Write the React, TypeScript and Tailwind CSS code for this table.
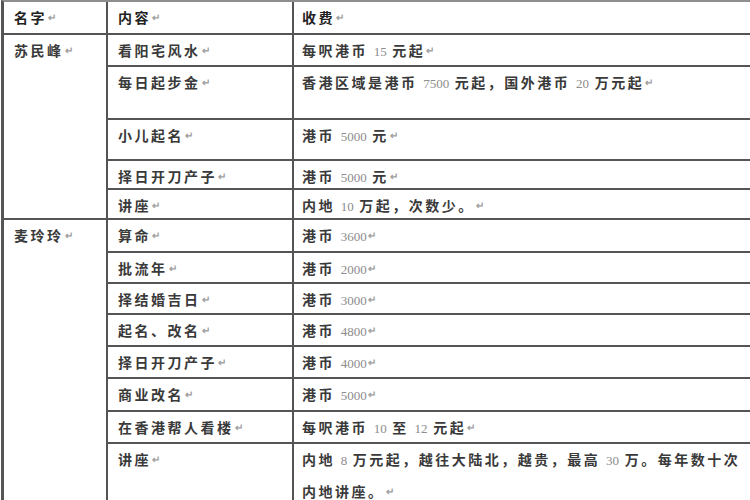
import React from "react";

const Ret = () => (
  <span className="ml-[1px] align-top text-[10px] tracking-normal text-[#a0a0a0]">↵</span>
);

function Txt({ s }: { s: string }) {
  const parts = s.split(/(\d+)/);
  return (
    <>
      {parts.map((p, i) =>
        /^\d+$/.test(p) ? (
          <span key={i} className="font-['Liberation_Serif',serif] font-normal text-[13px] tracking-normal text-[#8c8c8c]">
            {p}
          </span>
        ) : (
          <span key={i}>{p}</span>
        )
      )}
    </>
  );
}

type Row = { c: string; f: string[]; h: string };

const g1: Row[] = [
  { c: "看阳宅风水", f: ["每呎港币 15 元起"], h: "h-[32px]" },
  { c: "每日起步金", f: ["香港区域是港币 7500 元起，国外港币 20 万元起"], h: "h-[53px]" },
  { c: "小儿起名", f: ["港币 5000 元"], h: "h-[41px]" },
  { c: "择日开刀产子", f: ["港币 5000 元"], h: "h-[29px]" },
  { c: "讲座", f: ["内地 10 万起，次数少。"], h: "h-[28px]" },
];

const g2: Row[] = [
  { c: "算命", f: ["港币 3600"], h: "h-[33px]" },
  { c: "批流年", f: ["港币 2000"], h: "h-[31px]" },
  { c: "择结婚吉日", f: ["港币 3000"], h: "h-[31px]" },
  { c: "起名、改名", f: ["港币 4800"], h: "h-[32px]" },
  { c: "择日开刀产子", f: ["港币 4000"], h: "h-[32px]" },
  { c: "商业改名", f: ["港币 5000"], h: "h-[33px]" },
  { c: "在香港帮人看楼", f: ["每呎港币 10 至 12 元起"], h: "h-[32px]" },
  {
    c: "讲座",
    f: ["内地 8 万元起，越往大陆北，越贵，最高 30 万。每年数十次", "内地讲座。"],
    h: "h-[80px]",
  },
];

function Group({ name, rows }: { name: string; rows: Row[] }) {
  return (
    <div className="flex border-b-2 border-[#555555]">
      <div className="w-[104px] shrink-0 border-r-2 border-[#555555] pl-[10px]">
        <Txt s={name} />
        <Ret />
      </div>
      <div className="flex flex-1 flex-col">
        {rows.map((r, i) => (
          <div
            key={i}
            className={`flex ${r.h} ${i < rows.length - 1 ? "border-b-2 border-[#555555]" : ""}`}
          >
            <div className="w-[186px] shrink-0 border-r-2 border-[#555555] pl-[10px]">
              <Txt s={r.c} />
              <Ret />
            </div>
            <div className="flex-1 pl-[8px] whitespace-nowrap">
              {r.f.map((l, j) => (
                <div key={j}>
                  <Txt s={l} />
                  {j === r.f.length - 1 && <Ret />}
                </div>
              ))}
            </div>
          </div>
        ))}
      </div>
    </div>
  );
}

export default function App() {
  return (
    <div className="h-[500px] w-[750px] overflow-hidden bg-white font-['Noto_Sans_CJK_SC',sans-serif] text-[14px] font-semibold leading-[30px] tracking-[2.5px] text-[#3a3a3a]">
      <div className="ml-[1px] w-[780px] border-t-2 border-l-[3px] border-t-[#8e8e8e] border-l-[#555555]">
        <div className="flex h-[33px] border-b-2 border-[#555555] font-bold text-[#222222]">
          <div className="w-[104px] shrink-0 border-r-2 border-[#555555] pl-[10px]">
            名字<Ret />
          </div>
          <div className="w-[186px] shrink-0 border-r-2 border-[#555555] pl-[10px]">
            内容<Ret />
          </div>
          <div className="flex-1 pl-[8px]">
            收费<Ret />
          </div>
        </div>
        <Group name="苏民峰" rows={g1} />
        <Group name="麦玲玲" rows={g2} />
      </div>
    </div>
  );
}
